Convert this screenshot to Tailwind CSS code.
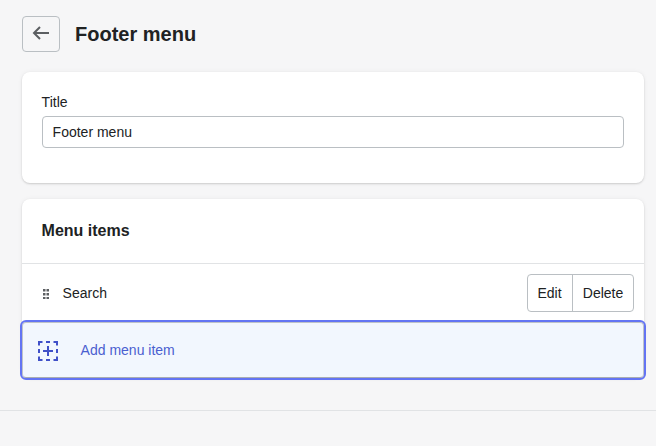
<!DOCTYPE html>
<html lang="en">
<head>
<meta charset="utf-8">
<script src="https://cdn.jsdelivr.net/npm/@tailwindcss/browser@4"></script>
</head>
<body class="h-[446px] w-[656px] overflow-hidden bg-[#f6f6f7] font-['Liberation_Sans',sans-serif] text-[#202223]">
  <div class="pt-4 pr-3 pl-[22px]">
    <header class="flex h-9 items-center gap-[15px]">
      <button class="flex h-9 w-[38px] items-center justify-center rounded-[4px] border border-[#babfc3]">
        <svg class="h-5 w-5 text-[#5c5f62]" viewBox="0 0 20 20" fill="none" stroke="currentColor" stroke-width="2"><path d="M18 9H3M9 3 3 9l6 6"/></svg>
      </button>
      <h1 class="text-xl leading-9 font-bold">Footer menu</h1>
    </header>
    <section class="mt-5 h-[111px] rounded-lg bg-white px-[19.6px] pt-5 shadow-[0_0_5px_rgba(23,24,24,0.05),0_1px_2px_rgba(0,0,0,0.15)]">
      <label class="block text-sm leading-5">Title</label>
      <div class="mt-1 flex h-8 items-center rounded-[4px] border border-[#babfc3] px-2.5 text-sm">Footer menu</div>
    </section>
    <section class="mt-4 rounded-lg bg-white shadow-[0_0_5px_rgba(23,24,24,0.05),0_1px_2px_rgba(0,0,0,0.15)]">
      <h2 class="h-[64px] px-[19.6px] pt-5 text-base leading-6 font-bold">Menu items</h2>
      <div class="flex h-[59px] items-center border-t border-[#e1e3e5] pr-[10px] pl-[21px] text-sm">
        <svg class="mt-0.5 h-2.5 w-2 text-[#5c5f62]" viewBox="0 0 8 10" fill="currentColor"><rect x="0" y="0" width="2.500" height="2.500"/><rect x="3.500" y="0" width="2.500" height="2.500"/><rect x="0" y="4" width="2.500" height="2.500"/><rect x="3.500" y="4" width="2.500" height="2.500"/><rect x="0" y="8" width="2.500" height="2.500"/><rect x="3.500" y="8" width="2.500" height="2.500"/></svg>
        <span class="ml-[11.6px]">Search</span>
        <div class="ml-auto flex h-[38px] rounded-[4px] border border-[#babfc3]">
          <button class="w-[45px] border-r border-[#babfc3] pr-px">Edit</button>
          <button class="w-[60px]">Delete</button>
        </div>
      </div>
      <button class="relative flex h-[56px] w-full items-center rounded-[4px] border border-[#bfc3c8] border-b-[#a8adb2] bg-[#f2f7fe] pl-[15px] text-sm text-[#4a5fd0] outline-2 outline-offset-0 outline-[#6374f3]">
        <svg class="mt-0.5 h-5 w-5 text-[#4050c8]" viewBox="0 0 20 20" fill="none" stroke="currentColor" stroke-width="2"><path d="M1 4.500V1h3.500M8 1h4M15.500 1H19v3.500M19 8v4M19 15.500V19h-3.500M12 19H8M4.500 19H1v-3.500M1 12V8M10 5v10M5 10h10"/></svg>
        <span class="ml-[22.6px]">Add menu item</span>
      </button>
    </section>
  </div>
  <div class="mt-8 border-t border-[#e1e3e5]"></div>
</body>
</html>
